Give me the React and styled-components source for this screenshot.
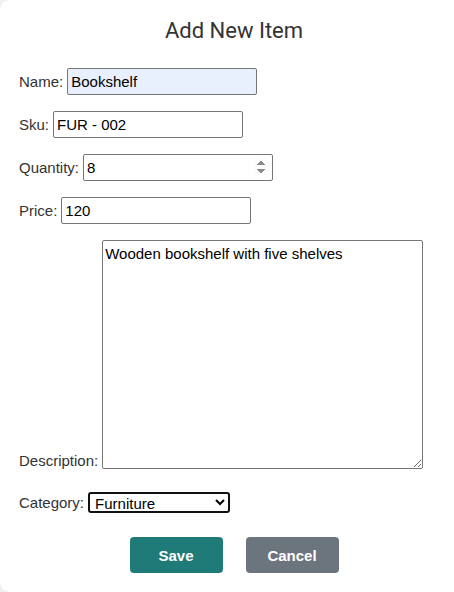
import React from "react";
import styled, { createGlobalStyle } from "styled-components";

const GlobalStyle = createGlobalStyle`
  html, body {
    margin: 0;
    padding: 0;
    overflow: hidden;
    background: #eef0f3;
  }
`;

const Card = styled.div`
  box-sizing: border-box;
  width: 468px;
  height: 592px;
  background: #fff;
  border-radius: 10px;
  padding: 18px 0 0 19px;
  font-family: "Liberation Sans", Arial, sans-serif;
  color: #333;
`;

const Title = styled.h2`
  margin: 0 0 24px;
  padding-right: 19px;
  font-family: Roboto, "Noto Sans", sans-serif;
  font-weight: 400;
  font-size: 22px;
  line-height: 26px;
  text-align: center;
  color: #333;
`;

const Form = styled.form`
  display: flex;
  flex-direction: column;
  gap: 16px;
`;

const Row = styled.div`
  display: flex;
  align-items: ${(p) => (p.$bottom ? "flex-end" : "center")};
  gap: 4px;
  margin-top: ${(p) => p.$offset || 0}px;
`;

const Label = styled.label`
  font-size: 15px;
  line-height: 17px;
  color: #333;
`;

const Input = styled.input`
  box-sizing: border-box;
  width: 190px;
  height: 27px;
  padding: 4px 3px;
  border: 1px solid #767676;
  border-radius: 2px;
  font-family: "Liberation Sans", Arial, sans-serif;
  font-size: 15px;
  color: #000;
  background: ${(p) => (p.$filled ? "#e8f0fe" : "#fff")};
  outline: none;

  &::-webkit-inner-spin-button,
  &::-webkit-outer-spin-button {
    opacity: 1;
  }
`;

const TextArea = styled.textarea`
  box-sizing: border-box;
  width: 321px;
  height: 229px;
  margin: 0;
  padding: 4px 2px;
  border: 1px solid #767676;
  border-radius: 2px;
  font-family: "Liberation Sans", Arial, sans-serif;
  font-size: 15px;
  color: #000;
  resize: both;
  outline: none;
`;

const Select = styled.select`
  box-sizing: border-box;
  width: 142px;
  height: 21px;
  margin: 0;
  padding: 0 1px;
  border: 2px solid #111;
  border-radius: 3px;
  font-family: "Liberation Sans", Arial, sans-serif;
  font-size: 15px;
  color: #000;
  background: #fff;
  outline: none;
`;

const Actions = styled.div`
  display: flex;
  justify-content: center;
  gap: 23px;
  margin-top: 8px;
  padding-right: 19px;
`;

const Button = styled.button`
  box-sizing: border-box;
  width: 93px;
  height: 36px;
  border: none;
  border-radius: 4px;
  background: ${(p) => (p.$variant === "cancel" ? "#6c757d" : "#1e7b78")};
  color: #fff;
  font-family: "Liberation Sans", Arial, sans-serif;
  font-size: 15px;
  font-weight: 700;
  cursor: pointer;
`;

export default function App() {
  return (
    <>
      <GlobalStyle />
      <Card>
        <Title>Add New Item</Title>
        <Form onSubmit={(e) => e.preventDefault()}>
          <Row>
            <Label>Name:</Label>
            <Input $filled defaultValue="Bookshelf" />
          </Row>
          <Row>
            <Label>Sku:</Label>
            <Input defaultValue="FUR - 002" />
          </Row>
          <Row>
            <Label>Quantity:</Label>
            <Input type="number" defaultValue="8" />
          </Row>
          <Row>
            <Label>Price:</Label>
            <Input defaultValue="120" />
          </Row>
          <Row $bottom>
            <Label>Description:</Label>
            <TextArea defaultValue="Wooden bookshelf with five shelves" />
          </Row>
          <Row $offset={7}>
            <Label>Category:</Label>
            <Select defaultValue="Furniture">
              <option>Furniture</option>
              <option>Electronics</option>
              <option>Clothing</option>
            </Select>
          </Row>
          <Actions>
            <Button type="submit">Save</Button>
            <Button type="button" $variant="cancel">
              Cancel
            </Button>
          </Actions>
        </Form>
      </Card>
    </>
  );
}
